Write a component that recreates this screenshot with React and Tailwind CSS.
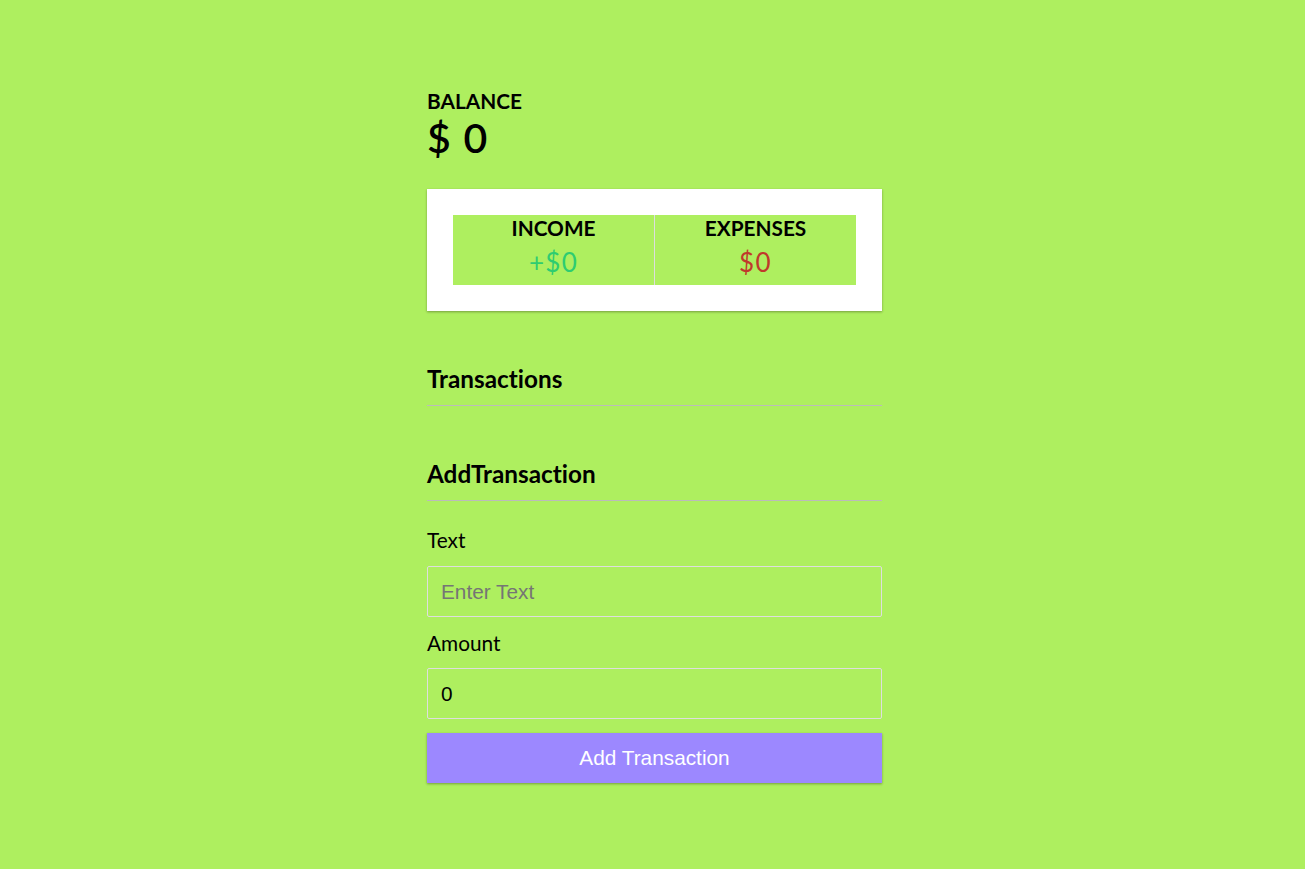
export default function App() {
  return (
    <div className="min-h-screen w-full bg-[#aeef5f] pl-[4px] text-black [font-variant-ligatures:none]" style={{ fontFamily: "Lato, 'Noto Sans', sans-serif" }}>
      <div className="mx-auto w-[455px] pt-[89px] pb-[60px]">
        <h4 className="m-0 text-[20.8px] leading-[24px] font-bold uppercase">Balance</h4>
        <h1 className="m-0 text-[41px] leading-[50px] font-semibold tracking-[1.3px]">$ 0</h1>

        <div className="mt-[26px] bg-white p-[26px] shadow-[0_1px_3px_rgba(0,0,0,0.12),0_1px_2px_rgba(0,0,0,0.24)]">
          <div className="flex h-[70px] bg-[#aeef5f]">
            <div className="flex-1 border-r border-[#dddddd] text-center">
              <h4 className="m-0 text-[20.8px] leading-[25px] font-bold uppercase">Income</h4>
              <p className="mt-[8px] text-[26px] leading-[29px] tracking-[1.3px] text-[#2ecc71]">+$0</p>
            </div>
            <div className="flex-1 text-center">
              <h4 className="m-0 text-[20.8px] leading-[25px] font-bold uppercase">Expenses</h4>
              <p className="mt-[8px] text-[26px] leading-[29px] tracking-[1.3px] text-[#c0392b]">$0</p>
            </div>
          </div>
        </div>

        <h3 className="mt-[51px] border-b border-[#bbbbbb] pb-[10px] text-[24.3px] leading-[33px] font-bold">Transactions</h3>
        <ul className="m-0 p-0"></ul>

        <h3 className="mt-[51px] border-b border-[#bbbbbb] pb-[10px] text-[24.3px] leading-[33px] font-bold">AddTransaction</h3>

        <form onSubmit={(e) => e.preventDefault()}>
          <label className="mt-[26px] mb-[13px] block text-[20.8px] leading-[26px]">Text</label>
          <input
            type="text"
            placeholder="Enter Text"
            className="block h-[51px] w-full rounded-[2px] border border-[#dedede] bg-transparent px-[13px] text-[20.8px] text-black placeholder:text-[#757575] outline-none"
            style={{ fontFamily: "'Liberation Sans', Arial, sans-serif" }}
          />
          <label className="mt-[14px] mb-[13px] block text-[20.8px] leading-[24px]">Amount</label>
          <input
            type="text"
            defaultValue="0"
            className="block h-[51px] w-full rounded-[2px] border border-[#dedede] bg-transparent px-[13px] text-[20.8px] text-black outline-none"
            style={{ fontFamily: "'Liberation Sans', Arial, sans-serif" }}
          />
          <button
            type="submit"
            className="mt-[14px] block h-[50px] w-full bg-[#9c88ff] text-[20.8px] text-white shadow-[0_1px_3px_rgba(0,0,0,0.12),0_1px_2px_rgba(0,0,0,0.24)]"
            style={{ fontFamily: "'Liberation Sans', Arial, sans-serif" }}
          >
            Add Transaction
          </button>
        </form>
      </div>
    </div>
  );
}
